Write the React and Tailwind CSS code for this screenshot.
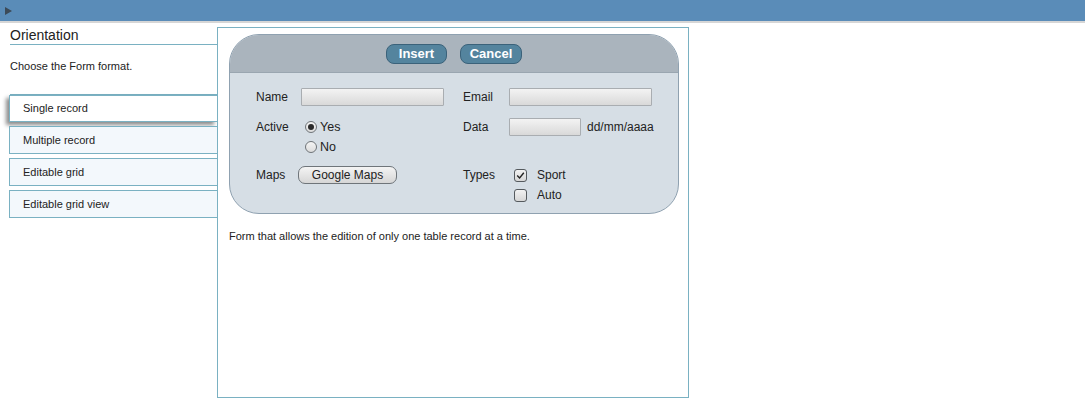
import React from "react";

const teal = "border-[#7ab1c2]";

function Radio({ checked }) {
  return (
    <span className="inline-flex h-[12px] w-[12px] items-center justify-center rounded-full border border-[#6f7478] bg-[linear-gradient(#f4f4f4,#dcdcdc)]">
      {checked && <span className="h-[6px] w-[6px] rounded-full bg-[#2a2a2a]" />}
    </span>
  );
}

function Check({ checked }) {
  return (
    <span className="inline-flex h-[13px] w-[13px] items-center justify-center rounded-[3px] border border-[#555a5e] bg-[linear-gradient(#f2f2f2,#d6d6d6)]">
      {checked && (
        <svg width="9" height="9" viewBox="0 0 9 9">
          <path d="M1.2 4.6 L3.6 7 L7.8 1.8" fill="none" stroke="#222" strokeWidth="1.4" />
        </svg>
      )}
    </span>
  );
}

const inputCls =
  "h-[18px] border border-[#a9adb1] bg-[linear-gradient(#f3f3f3,#d9d9d9)] rounded-[1px]";

export default function App() {
  return (
    <div className="min-h-[401px] bg-white text-[#222]" style={{ fontFamily: '"Liberation Sans", Arial, sans-serif' }}>
      <div className="h-[21px] bg-[#5a8cb8] flex items-center pl-[5px]">
        <svg width="7" height="8" viewBox="0 0 7 8">
          <path d="M0 0 L7 4 L0 8 Z" fill="#3c4a57" />
        </svg>
      </div>
      <div className="h-[2px] bg-[#d6d6d6]" />
      <div className="flex pt-[4px]">
        <div className="ml-[9px] w-[208px] flex flex-col">
          <div className={`ml-px h-[18px] border-b ${teal} text-[14px] leading-[17px]`}>Orientation</div>
          <div className={`ml-px h-[50px] border-b ${teal} text-[11px] pt-[13px]`}>Choose the Form format.</div>
          <div className="flex flex-col gap-[4px]">
            <div className={`h-[27px] border ${teal} border-r-0 bg-white text-[11px] leading-[25px] pl-[13px] shadow-[-3px_3px_4px_rgba(0,0,0,0.45)]`}>
              Single record
            </div>
            {["Multiple record", "Editable grid", "Editable grid view"].map((t) => (
              <div key={t} className={`h-[28px] border ${teal} border-r-0 bg-[#f3f8fc] text-[11px] leading-[26px] pl-[13px]`}>
                {t}
              </div>
            ))}
          </div>
        </div>
        <div className={`w-[472px] h-[371px] border ${teal} pl-[11px] pt-[6px]`}>
          <div className="w-[450px] h-[180px] rounded-[30px] border border-[#8fa1b0] overflow-hidden bg-[#d6dee5]" style={{ fontFamily: '"Liberation Sans", Helvetica, Arial, sans-serif' }}>
            <div className="h-[38px] bg-[#aab4bd] border-b border-[#9aa6b0] flex justify-center items-start pt-[9px] gap-[13px]">
              <div className="w-[61px] h-[20px] rounded-[8px] bg-[#54849e] border border-[#3b627a] text-white font-bold text-[13px] leading-[18px] text-center">Insert</div>
              <div className="w-[62px] h-[20px] rounded-[8px] bg-[#54849e] border border-[#3b627a] text-white font-bold text-[13px] leading-[18px] text-center">Cancel</div>
            </div>
            <div className="pl-[26px] pt-[15px] text-[12px]">
              <div className="flex h-[18px] items-center">
                <div className="w-[207px] flex items-center">
                  <span className="w-[45px]">Name</span>
                  <span className={`${inputCls} w-[143px]`} />
                </div>
                <span className="w-[46px]">Email</span>
                <span className={`${inputCls} w-[143px]`} />
              </div>
              <div className="flex mt-[12px]">
                <div className="w-[207px] flex">
                  <span className="w-[49px] leading-[18px]">Active</span>
                  <div className="flex flex-col">
                    <div className="flex items-center h-[18px] gap-[3px]"><Radio checked /><span className="text-[12.5px]">Yes</span></div>
                    <div className="flex items-center h-[18px] gap-[3px] mt-[2px]"><Radio /><span className="text-[12.5px]">No</span></div>
                  </div>
                </div>
                <div className="flex items-start">
                  <span className="w-[46px] leading-[18px]">Data</span>
                  <span className={`${inputCls} w-[72px]`} />
                  <span className="ml-[6px] leading-[18px]">dd/mm/aaaa</span>
                </div>
              </div>
              <div className="flex mt-[10px]">
                <div className="w-[207px] flex items-start">
                  <span className="w-[42px] leading-[18px]">Maps</span>
                  <span className="w-[99px] h-[18px] rounded-[7px] border border-[#6f757a] bg-[linear-gradient(#f4f4f4,#d6d6d6)] text-center leading-[16px]">Google Maps</span>
                </div>
                <div className="flex items-start">
                  <span className="w-[51px] leading-[18px]">Types</span>
                  <div className="flex flex-col">
                    <div className="flex items-center h-[18px] gap-[10px]"><Check checked /><span>Sport</span></div>
                    <div className="flex items-center h-[18px] gap-[10px] mt-[2px]"><Check /><span>Auto</span></div>
                  </div>
                </div>
              </div>
            </div>
          </div>
          <div className="text-[11px] mt-[14px]">Form that allows the edition of only one table record at a time.</div>
        </div>
      </div>
    </div>
  );
}
